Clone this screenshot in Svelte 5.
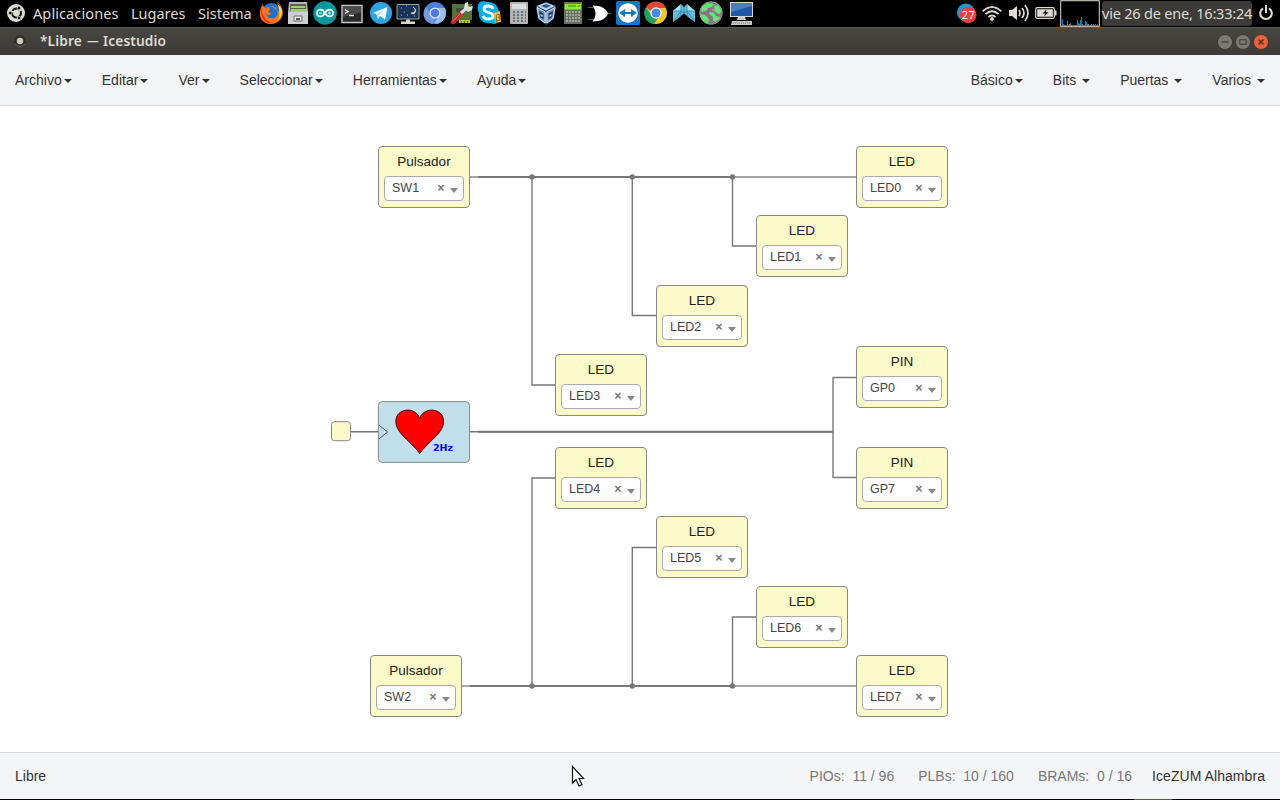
<script>
  const launchers = [
    ['firefox', 0], ['files', 3], ['arduino', 3], ['terminal', 3], ['telegram', 5],
    ['night', 3], ['chromium', 3], ['tools', 2], ['skype', 4], ['calc', 6],
    ['vbox', 3], ['calc2', 3], ['gate', 3], ['teamviewer', 4], ['chrome', 4],
    ['crystal', 4], ['globe', 3], ['computer', 6]
  ];
  const menus = ['Archivo', 'Editar', 'Ver', 'Seleccionar', 'Herramientas', 'Ayuda'];
  const collections = ['Básico', 'Bits ', 'Puertas ', 'Varios '];
  const blocks = [
    ['Pulsador', 'SW1', 378, 146], ['LED', 'LED0', 856, 146], ['LED', 'LED1', 756, 215],
    ['LED', 'LED2', 656, 285], ['LED', 'LED3', 555, 354], ['PIN', 'GP0', 856, 346],
    ['PIN', 'GP7', 856, 447], ['LED', 'LED4', 555, 447], ['LED', 'LED5', 656, 516],
    ['LED', 'LED6', 756, 586], ['LED', 'LED7', 856, 655], ['Pulsador', 'SW2', 370, 655]
  ];
  const joints = [[532, 177], [632.3, 177], [732.5, 177], [532, 686], [632.3, 686], [732.5, 686]];
  const load = [7, 2, 1, 1, 1, 5, 1, 2, 3, 1, 1, 1, 1, 1, 1, 6, 3, 2, 6, 9, 2, 1, 1, 5, 4, 2, 2, 1, 1, 2, 1, 2, 1, 2, 1, 2];
</script>

{#snippet icon(name)}
  {#if name === 'firefox'}
    <circle cx="12.5" cy="12" r="10" fill="#1d72d8" />
    <path d="M12 5c4 0 7 3 6 6l4-1c0-3-1-6-4-9 6 4 8 12 3 18-6 6-15 5-19-1C0 13 1 7 4 3c0 2 1 3 2 4 2-1 4-1 5 1l-2 3c1 1 3 1 4 1-2 2-4 3-6 1 1 4 6 6 10 3 4-4 1-8-5-11z" fill="#ff7516" />
    <path d="M18 2c6 5 7 12 1 17 2-5 2-10-1-17z" fill="#ffdb2c" />
    <path d="M3 6c-1 8 3 14 10 16-7 1-13-6-10-16z" fill="#f3202f" />
  {:else if name === 'files'}
    <path d="M3 1h18l1 10H2z" fill="#b5b5b3" /><path d="M4 3h16v8H4z" fill="#576051" />
    <path d="M5 5h14v2H5zm0 3h15v3H4z" fill="#9fd45a" />
    <path d="M2 11h20v12H2z" fill="#cfcfcf" /><path d="M8 15h8v5H8z" fill="#eee" stroke="#666" /><path d="M10 17h4v2h-4z" fill="#555" />
  {:else if name === 'arduino'}
    <circle cx="12" cy="12" r="11.8" fill="#00979d" />
    <path d="M12 12c-2-4-8-5-8 0s6 4 8 0 8-5 8 0-6 4-8 0z" fill="none" stroke="#fff" stroke-width="1.8" />
    <path d="M6 12h3m6 0h3m-1.5-1.5v3" stroke="#fff" />
  {:else if name === 'terminal'}
    <path d="M2 4.500h20v17H2z" fill="#28292a" stroke="#c8c8c8" stroke-width="1.4" /><path d="M3 5.500h18v6L3 16z" fill="#494b4b" />
    <path d="M5 8.500l3 2-3 2m4 2h5" fill="none" stroke="#eee" stroke-width="1.4" />
  {:else if name === 'telegram'}
    <circle cx="12" cy="12" r="11" fill="#2ca5e0" /><path d="M4 12l14.500-6-2.500 12.500-5-3.500-2 3-1.500-5z" fill="#fff" /><path d="M7.500 13l8.500-5-6 6.500-1 3.500z" fill="#bcd9ea" />
  {:else if name === 'night'}
    <path d="M1 3.500h22v14.500H1z" fill="#193255" stroke="#a2a29d" /><path d="M17 6c3 2 3 6-2 6 4 3 7-3 2-6z" fill="#fff" stroke="#fff" stroke-width=".5" />
    <path d="M5 7h1m4-2h1M8 11h1m-4 3h1m5 0h1m6 1h1" stroke="#9fc1e7" /><path d="M10 18.500h4v2h5v2.500H5v-2.500h5z" fill="#d7d7d2" />
  {:else if name === 'chromium'}
    <circle cx="12" cy="12" r="11" fill="#4d7fe0" /><path d="M12 12V7h10c3 7-1 14-8 16l-3-1 5-7z" fill="#9bbcf3" /><path d="M3 6l5 8 4 3-2 6C1 22-2 12 3 6z" fill="#7199e8" />
    <circle cx="12" cy="12" r="5.5" fill="#e4edff" /><circle cx="12" cy="12" r="4.3" fill="#4a7be0" />
  {:else if name === 'tools'}
    <path d="M3 3h20v16H3z" fill="#51743c" /><path d="M7 7h10v4H7z" fill="#474c43" /><path d="M10 19h11v3H10z" fill="#b9bf29" /><path d="M12.500 20v2m3-2v2m3-2v2" stroke="#4b6928" />
    <path d="M4 21l8-8" stroke="#d22b31" stroke-width="4.5" stroke-linecap="round" /><path d="M4 20l7-7" stroke="#f16766" /><path d="M12 12l7-6" stroke="#ddd" stroke-width="3" /><path d="M15 7l1-5 3-1v4l2 1 3-1-1 4-4 2z" fill="#ddd" />
  {:else if name === 'skype'}
    <path d="M2 2C5-1 8 1 11 1c7 0 11 5 11 11 2 9-3 13-8 10C6 23 1 18 2 12 0 9 0 5 2 2z" fill="#00aff0" />
    <path d="M16 8c-1-4-9-4-9 0 0 5 9 2 9 7 0 4-8 4-10 0" fill="none" stroke="#fff" stroke-width="2.8" />
    <path d="M17 12l6-2 1 11-6 1z" fill="#f6c12f" /><text x="18" y="19.500" font-size="9.500" fill="#755814">β</text>
  {:else if name === 'calc'}
    <rect x="3" y="1" width="18" height="22" rx="1" fill="#b5b5b3" /><path d="M5 3h14v5H5z" fill="#dadfe1" />
    {#each [11, 14, 17, 20] as y}<path d="M6 {y}h2m2 0h2m2 0h2m2 0h1" stroke="#607886" stroke-width="2" />{/each}
  {:else if name === 'vbox'}
    <path d="M2 5l10-4 10 4-2 13-8 6-8-6z" fill="#234a80" /><path d="M3 5l9-3.500L21 5l-9 4.500z" fill="#bdd2ed" /><path d="M7 5l5-2 5 2-5 2z" fill="#31588e" />
    <path d="M3 6.500l8.200 4.500v11L5 17.500zM21 6.500L12.800 11v11l6.200-4.500z" fill="#7896bd" stroke="#dce8f8" stroke-width="1" />
    <path d="M5 10l4.500 2.500v6L6 16zM19 10l-4.500 2.500v6L18 16z" fill="#173966" /><path d="M6.500 13l2 1v2l-2-1zm11 0l-2 1v2l2-1z" fill="#c8d9ee" />
  {:else if name === 'calc2'}
    <rect x="3" y="1" width="18" height="22" fill="#66705f" /><path d="M4 3h16v5.500H4z" fill="#8fea2d" /><path d="M7 5h8m2 0h2" stroke="#43791a" />
    {#each [11, 14, 17, 20] as y}<path d="M5 {y}h2m1 0h2m1 0h2m1 0h2m1 0h2" stroke="#b2b7aa" stroke-width="1.7" />{/each}
  {:else if name === 'gate'}
    <path d="M0 6.500h7m-7 12h7M18 12.500h5" stroke="#168425" /><path d="M4.500 4.500C14 4.500 18 8 20 12.500 18 17 14 20.500 4.500 20.500c4-5 4-11 0-16z" fill="#fff" />
  {:else if name === 'teamviewer'}
    <rect width="24" height="24" rx="2" fill="#1576d2" /><circle cx="12" cy="12" r="9.800" fill="#fff" /><path d="M3 12l6-4v3h6V8l6 4-6 4v-3H9v3z" fill="#1576bd" />
  {:else if name === 'chrome'}
    <circle cx="12" cy="12" r="11" fill="#f6c52a" /><path d="M2 6C7-2 19-1 22 7H12l-3 5z" fill="#df4638" /><path d="M2 6l6 9 6 2-4 6C1 22-2 12 2 6z" fill="#1da45c" />
    <circle cx="12" cy="12" r="5.7" fill="#fff" /><circle cx="12" cy="12" r="4.5" fill="#448af7" />
  {:else if name === 'crystal'}
    <path d="M1 10l8-7 3 3 3-3 8 7v11l-7-5-4-4-4 4-7 5z" fill="#66bddb" /><path d="M1 10l8-7v7zm22 0l-8-7v7z" fill="#a3dff1" />
    <path d="M9 3v7l-8 11M9 10l-1 6M1 10h8l3 2 3-2h8M15 3v7l8 11M15 10l1 6M12 6v6" stroke="#2d80a6" stroke-width=".8" fill="none" />
  {:else if name === 'globe'}
    <circle cx="12" cy="12" r="11.5" fill="#8b718b" /><path d="M3 6l5-4 7 1-2 3-4 1-2 3-5 1zm12-1l4-1 4 6-3 3-4-2zM1 13l5 1 4 4-1 5-6-4zm10-2l4 1 2 3 4 1-4 5-3-1v-4l-4-3z" fill="#55ee62" />
    <path d="M2 8h7m4 1h8M2 17h6m6 1h7M10 12h5" stroke="#d0a4d0" stroke-width=".8" /><circle cx="12" cy="12" r="11.200" fill="none" stroke="#6cc777" stroke-width=".7" />
  {:else if name === 'computer'}
    <path d="M1 1h23v15H1z" fill="#d5d7d5" /><path d="M2 2h21v13H2z" fill="#1c58a5" /><path d="M2 2h21v3L2 11z" fill="#487dc1" /><path d="M9 16h7l1 3H8zM3 20h20v4H2z" fill="#c7c8c2" /><path d="M4 22h17" stroke="#777" stroke-dasharray="1 1" />
  {/if}
{/snippet}

<div class="screen">
  <header class="panel">
    <svg class="ubuntu" width="18" height="18" viewBox="0 0 18 18"><circle cx="9" cy="9" r="9" fill="#dfdbd2" /><circle cx="9.5" cy="9" r="4.5" fill="none" stroke="#111" stroke-width="2" stroke-dasharray="8 1.5" stroke-dashoffset="3" /><g fill="#111" stroke="#dfdbd2" stroke-width=".7"><circle cx="3.3" cy="9" r="1.8" /><circle cx="12" cy="4" r="1.8" /><circle cx="12" cy="14" r="1.8" /></g></svg>
    <nav class="desktop"><span>Aplicaciones</span><span>Lugares</span><span>Sistema</span></nav>
    <div class="launchers">
      {#each launchers as [name, gap]}
        <svg width="24" height="24" viewBox="0 0 24 24" style:margin-left="{gap}px">{@render icon(name)}</svg>
      {/each}
    </div>
    <div class="tray">
      <svg width="20" height="21" viewBox="0 0 20 21"><circle cx="9" cy="9.5" r="9" fill="#2497d3" /><circle cx="11.2" cy="12" r="8.3" fill="#f33d3b" /><text x="4.7" y="16" font-size="11" fill="#fff" textLength="13">27</text></svg>
      <svg class="wifi" width="20" height="15" viewBox="0 0 20 15" fill="none" stroke="#dfdbd2" stroke-width="1.8"><path d="M.7 5.2Q10-3 19.3 5.2M3.5 8.2q6.5-5.8 13 0M6.4 11.1q3.6-3.2 7.2 0" /><circle cx="10" cy="13" r="1" fill="#dfdbd2" /></svg>
      <svg class="sound" width="20" height="18" viewBox="0 0 20 18" fill="none" stroke="#dfdbd2" stroke-width="1.7"><path d="M0 6h3l5-4v14l-5-4H0z" fill="#dfdbd2" stroke="none" /><path d="M10 6q2 3 0 6M13 4q4 5 0 10M16 1q6 8 0 16" /></svg>
      <svg class="battery" width="22" height="12" viewBox="0 0 22 12"><rect x=".7" y=".7" width="18.6" height="10.6" rx="1.500" fill="none" stroke="#dfdbd2" stroke-width="1.2" /><path d="M2.200 2.200h15.600v7.600H2.200zM20 3.500h1.500v5H20z" fill="#dfdbd2" /><path d="M11.500 2.500l-4 4H10l-.8 3 4.300-4.300H11z" fill="#111" /></svg>
      <svg class="monitor" width="40" height="27" viewBox="0 0 40 27"><rect x=".7" y=".7" width="38.600" height="25.600" fill="#000" stroke="#dfdbd2" />{#each load as h, i}<rect x={2 + i} y={26 - h} width="1" height={h} fill="#0685d1" />{/each}</svg>
      <time>vie 26 de ene, 16:33:24</time>
      <svg class="power" width="14" height="16" viewBox="0 0 14 16" fill="none" stroke="#dfdbd2" stroke-width="2"><path d="M4 3.3a5.8 5.8 0 1 0 6 0M7 0v8" /></svg>
    </div>
  </header>

  <div class="titlebar">
    <svg class="appdot" width="14" height="14" viewBox="0 0 14 14"><circle cx="7" cy="7" r="6" fill="#302f2c" /><path d="M2 10q5 5 10 0" fill="none" stroke="#6a6964" /><circle cx="7" cy="7" r="3.2" fill="#ccc9c1" /></svg>
    <strong>*Libre <em>—</em> Icestudio</strong>
    <div class="controls">
      <svg width="16" height="16" viewBox="0 0 16 16"><circle cx="8" cy="8" r="7.5" fill="#7a7972" stroke="#33322f" stroke-width=".8" /><path d="M4.500 8h7" stroke="#393834" stroke-width="1.2" /></svg>
      <svg width="16" height="16" viewBox="0 0 16 16"><circle cx="8" cy="8" r="7.5" fill="#7a7972" stroke="#33322f" stroke-width=".8" /><path d="M4.800 5.8h6.400v4.4H4.800z" fill="none" stroke="#393834" /></svg>
      <svg width="16" height="16" viewBox="0 0 16 16"><circle cx="8" cy="8" r="7.5" fill="#eb6237" stroke="#33322f" stroke-width=".8" /><path d="M5.5 5.5l5 5m0-5l-5 5" stroke="#4c2b20" stroke-width="1.4" /></svg>
    </div>
  </div>

  <nav class="menubar">
    <div class="left">{#each menus as label}<span>{label}<i class="caret"></i></span>{/each}</div>
    <div class="right">{#each collections as label}<span>{label}<i class="caret"></i></span>{/each}</div>
  </nav>

  <main>
    <svg class="wires" width="1280" height="646" viewBox="0 106 1280 646" fill="none" stroke="#777">
      <path d="M470 177H856M462 686H856" stroke="#888" stroke-width="1.4" />
      <path d="M478 177H732M470 686H732M478 431.7H833" stroke-width="2" />
      <path d="M532 177V385H555M632.3 177V315.5H656M732.5 177V246H756M532 686V478H555M632.3 686V547.5H656M732.5 686V617H756M351 431.7H378M470 431.7H833M833 377V478M833 377.5H856M833 477.5H856" stroke-width="1.4" />
      {#each joints as [x, y]}<circle cx={x} cy={y} r="2.7" fill="#777" stroke="none" />{/each}
      <rect x="331.5" y="421.700" width="19" height="19" rx="3" fill="#fbfac9" stroke="#888" />
      <rect x="378.3" y="401.600" width="91.200" height="60.8" rx="4" fill="#c1dfeb" stroke="#888" />
      <path d="M379 425l8.5 7-8.5 7" stroke="#555" />
      <path d="M419.7 418.500C416 408 402 407.500 397 416c-6 15 13 23.500 22.7 37.5 9.7-14 28.7-22.500 22.7-37.500-5-8.500-19-8-22.700 2.500z" fill="#f00" stroke="#300" />
      <text class="hz" x="433" y="451">2Hz</text>
    </svg>
    {#each blocks as [title, value, x, y]}
      <section class="block" style:left="{x}px" style:top="{y - 106}px">
        <h2>{title}</h2>
        <div class="select"><span>{value}</span><b>×</b><i></i></div>
      </section>
    {/each}
  </main>

  <footer>
    <span>Libre</span>
    <div class="stats"><span>PIOs:&nbsp; 11 / 96</span><span>PLBs:&nbsp; 10 / 160</span><span>BRAMs:&nbsp; 0 / 16</span></div>
    <span class="board">IceZUM Alhambra</span>
  </footer>
  <div class="edge"><i></i></div>
  <svg class="pointer" width="14" height="23" viewBox="0 0 14 23"><path d="M1.5 1.5V18l3.5-3.5 3 6.5 3-1.3-3-6.2h4.5z" fill="#fff" stroke="#111" stroke-width="1.2" /></svg>
</div>

<style>
  :global(body) { margin: 0; overflow: hidden; }
  .screen { width: 1280px; height: 800px; display: flex; flex-direction: column; position: relative; background: #fff; font: 14px/20px "Liberation Sans", Arial, sans-serif; color: #333; }
  svg { display: block; flex: none; }
  .panel { height: 27px; box-sizing: border-box; background: #000; display: flex; align-items: center; padding: 0 0 1px 7px; color: #dfdbd2; font-family: "Noto Sans", sans-serif; flex: none; white-space: nowrap; }
  .desktop { display: flex; margin-left: 8px; width: 226px; font-size: 14.5px; }
  .desktop span:nth-child(1) { width: 98px; letter-spacing: .1px; }
  .desktop span:nth-child(2) { width: 67px; }
  .launchers { display: flex; width: 697px; }
  .tray { display: flex; align-items: center; height: 26px; }
  .tray > svg:first-child { margin-left: 1px; }
  .wifi { margin-left: 5px; }
  .sound { margin-left: 7px; }
  .battery { margin-left: 6px; }
  .monitor { margin-left: 3px; }
  time { width: 150px; height: 25px; box-sizing: border-box; line-height: 25px; margin-left: 2px; background: #3c3b37; border-radius: 3px; font-size: 14.5px; letter-spacing: -.2px; }
  .power { margin-left: 7px; }
  .titlebar { height: 28px; box-sizing: border-box; flex: none; display: flex; align-items: center; padding: 0 11px 0 13px; border-top: 1px solid #595852; background: linear-gradient(#474641, #3c3b37); color: #dfdbd2; font-family: "Noto Sans", sans-serif; }
  .appdot { margin-bottom: 1px; }
  strong { font-size: 13.7px; font-weight: 600; margin: 0 0 2px 13px; letter-spacing: .13px; }
  em { display: inline-block; font-style: normal; font-weight: 400; transform: scaleX(.85); }
  .controls { display: flex; gap: 2px; margin-left: auto; }
  .menubar { height: 51px; box-sizing: border-box; flex: none; background: #f4f5f7; border-bottom: 1px solid #d7d9dc; display: flex; align-items: center; justify-content: space-between; padding: 0 15px; }
  .left, .right { display: flex; gap: 30px; white-space: pre; }
  .caret { display: inline-block; margin-left: 2.1px; border: 4px solid transparent; border-top-color: #333; border-bottom: 0; vertical-align: middle; }
  main { height: 646px; position: relative; flex: none; }
  .hz { font: bold 9.5px "DejaVu Sans", sans-serif; fill: #00f; stroke: none; }
  .block { position: absolute; width: 92px; height: 62px; box-sizing: border-box; border: 1px solid #888; border-radius: 4px; background: #fbfac9; padding: 5px; }
  h2 { margin: 0 0 5px; font-size: 13.5px; line-height: 19px; font-weight: 400; text-align: center; color: #222; }
  .select { height: 25px; box-sizing: border-box; border: 1px solid #aaa; border-radius: 4px; background: #fff; display: flex; align-items: center; padding: 0 7px 2px; font-size: 12.5px; color: #444; }
  .select b { margin-left: auto; width: 8px; color: #777; font-size: 12.5px; text-align: center; }
  .select i { margin: 5px -2px 0 5px; border: 4.5px solid transparent; border-top: 5px solid #888; border-bottom: 0; }
  footer { height: 47px; box-sizing: border-box; flex: none; background: #f4f5f7; border-top: 1px solid #d7d9dc; display: flex; align-items: center; padding: 0 15px; }
  .stats { margin-left: auto; display: flex; gap: 24px; color: #777; }
  .board { margin-left: 20px; letter-spacing: .06px; }
  .edge { height: 1px; background: #000; display: flex; justify-content: flex-end; }
  .edge i { width: 38px; margin-right: 108px; background: #536138; }
  .pointer { position: absolute; left: 571px; top: 765px; }
</style>
